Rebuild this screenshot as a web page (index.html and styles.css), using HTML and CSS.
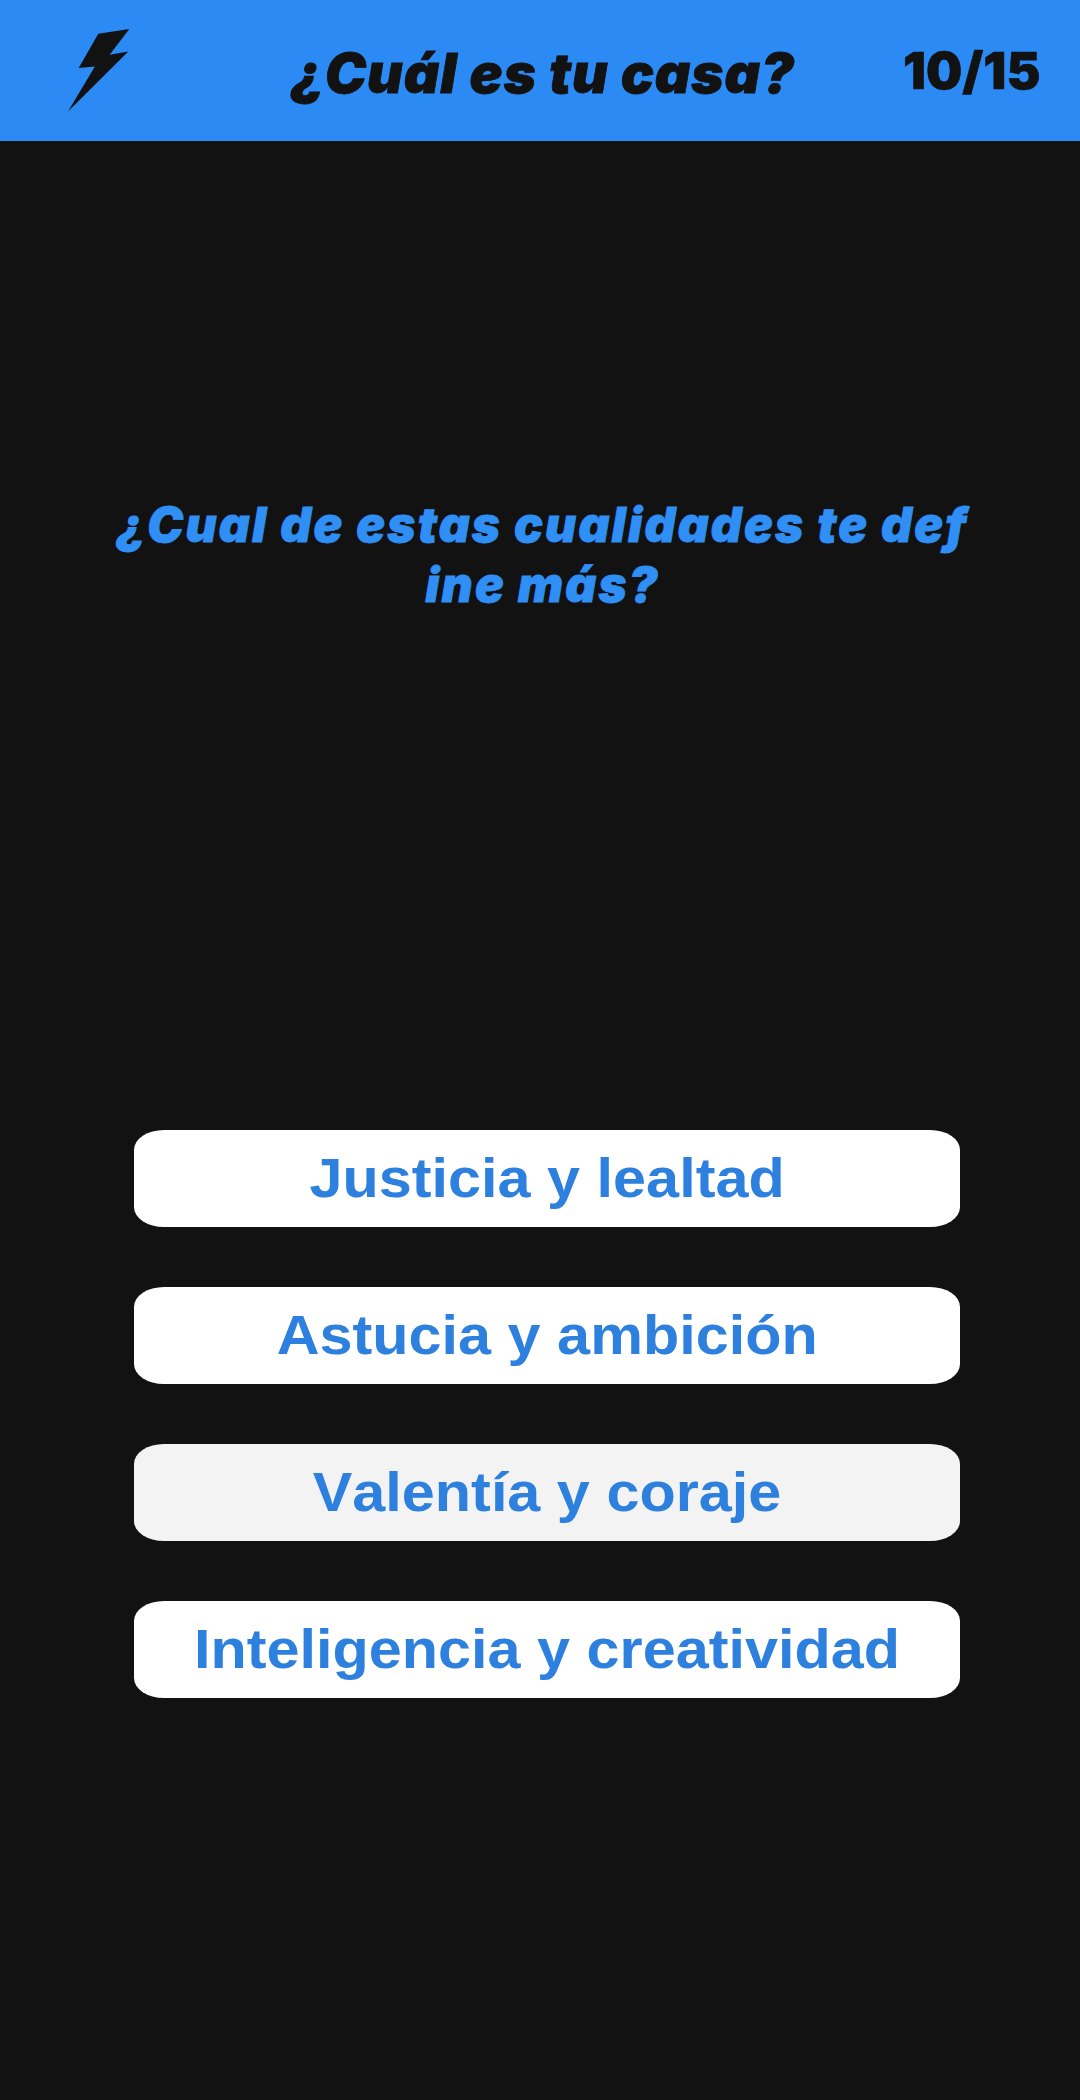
FILE: index.html
```html
<!DOCTYPE html>
<html lang="es">

<head>
    <meta charset="UTF-8">
    <meta name="viewport" content="width=device-width, initial-scale=1.0">
    <title>¿Cuál es tu casa?</title>
    <link rel="stylesheet" href="styles.css">
</head>

<body>
    <header class="top-bar">
        <svg class="bolt" viewBox="0 0 62 84" width="62" height="84">
            <path d="M61.3 0 L30.3 4.7 L10.7 39 L26.9 37.4 L0 82.4 L60.3 22.4 L41.7 25.7 Z" />
        </svg>
        <h1 class="quiz-title">¿Cuál es tu casa?</h1>
        <span class="progress">10/15</span>
    </header>

    <main class="content">
        <h2 class="question">¿Cual de estas cualidades te def<br>ine más?</h2>

        <div class="answers">
            <button type="button" class="answer"><span class="answer-text">Justicia y lealtad</span></button>
            <button type="button" class="answer"><span class="answer-text">Astucia y ambición</span></button>
            <button type="button" class="answer answer-hover"><span class="answer-text">Valentía y coraje</span></button>
            <button type="button" class="answer"><span class="answer-text">Inteligencia y creatividad</span></button>
        </div>
    </main>
</body>

</html>
```

FILE: styles.css
```css
* {
    box-sizing: border-box;
}

body {
    margin: 0;
    height: 2100px;
    background-color: #121212;
    font-family: "Liberation Sans", Arial, sans-serif;
}

/* Top bar */
.top-bar {
    display: flex;
    align-items: center;
    height: 141px;
    padding-left: 68px;
    background-color: #2b8af3;
    color: #121212;
}

.bolt {
    flex: none;
    fill: #121212;
}

.quiz-title {
    width: 501px;
    margin: 4px 0 0 161px;
    font-family: Inter, sans-serif;
    font-size: 55px;
    font-weight: 900;
    font-style: italic;
    letter-spacing: 1px;
    white-space: nowrap;
    -webkit-text-stroke: 0.8px #121212;
}

.progress {
    margin-left: 111px;
    font-family: Inter, sans-serif;
    font-size: 51px;
    font-weight: 900;
    -webkit-text-stroke: 0.6px #121212;
}

/* Question */
.content {
    padding-top: 354px;
}

.question {
    margin: 0;
    padding-left: 5px;
    font-family: Inter, sans-serif;
    font-size: 48px;
    font-weight: 900;
    font-style: italic;
    letter-spacing: 2.2px;
    line-height: 60px;
    text-align: center;
    color: #2f8ff5;
    -webkit-text-stroke: 0.8px #2f8ff5;
}

/* Answers */
.answers {
    display: flex;
    flex-direction: column;
    gap: 60px;
    width: 826px;
    margin: 515px 0 0 134px;
}

.answer {
    height: 97px;
    padding: 0 0 2px;
    border: none;
    border-radius: 30px / 20px;
    background-color: #fff;
    color: #2d80de;
    font-family: "Liberation Sans", Arial, sans-serif;
    font-size: 56px;
    font-weight: 700;
    font-kerning: none;
}

/* the reference type is stretched a little wider than the font */
.answer-text {
    display: inline-block;
    transform: scaleX(1.06);
}

.answer-hover {
    background-color: #f3f3f3;
}
```
